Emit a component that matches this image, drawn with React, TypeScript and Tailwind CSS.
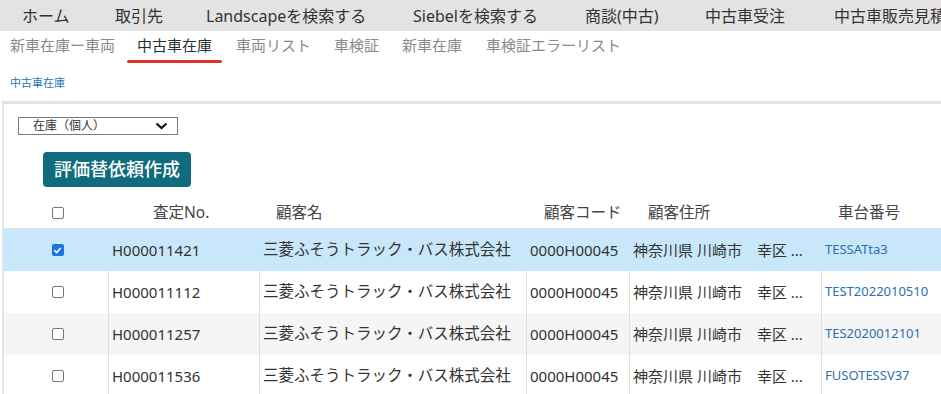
import React from 'react';

const navItems = [
  { label: 'ホーム', w: 'w-[93px]' },
  { label: '取引先', w: 'w-[91px]' },
  { label: 'Landscapeを検索する', w: 'w-[207px]' },
  { label: 'Siebelを検索する', w: 'w-[172px]' },
  { label: '商談(中古)', w: 'w-[120px]' },
  { label: '中古車受注', w: 'w-[129px]' },
  { label: '中古車販売見積', w: 'w-[140px]' },
];

const tabs = [
  { label: '新車在庫ー車両', w: 'w-[127px]' },
  { label: '中古車在庫', w: 'w-[99px]' },
  { label: '車両リスト', w: 'w-[98px]' },
  { label: '車検証', w: 'w-[68px]' },
  { label: '新車在庫', w: 'w-[84px]' },
  { label: '車検証エラーリスト', w: 'w-[160px]' },
];

const rows = [
  { checked: true, no: 'H000011421', vin: 'TESSATta3' },
  { checked: false, no: 'H000011112', vin: 'TEST2022010510' },
  { checked: false, no: 'H000011257', vin: 'TES2020012101' },
  { checked: false, no: 'H000011536', vin: 'FUSOTESSV37' },
];

const font = { fontFamily: '"Noto Sans", "Noto Sans CJK JP", sans-serif' };

function Checkbox({ checked }: { checked?: boolean }) {
  if (checked) {
    return (
      <span className="flex h-[12px] w-[12px] items-center justify-center rounded-[2px] bg-[#1a73e8]">
        <svg width="9" height="9" viewBox="0 0 10 10">
          <path d="M2 5.2 L4.2 7.3 L8 2.8" fill="none" stroke="white" strokeWidth="1.8" strokeLinecap="round" strokeLinejoin="round" />
        </svg>
      </span>
    );
  }
  return <span className="block h-[12px] w-[12px] rounded-[2px] border border-[#767676] bg-white" />;
}

export default function App() {
  return (
    <div className="h-[394px] w-[941px] overflow-hidden bg-white text-[#333]" style={font}>
      {/* Top nav */}
      <div className="flex h-[31px] items-center whitespace-nowrap bg-[#e3e3e3] pl-[22px] text-[16px] text-[#333]">
        {navItems.map((n) => (
          <span key={n.label} className={`shrink-0 ${n.w}`}>
            {n.label}
          </span>
        ))}
      </div>

      {/* Tabs */}
      <div className="flex h-[31px] items-start whitespace-nowrap pl-[10px] pt-[3px] text-[15px] text-[#8a8a8a]">
        {tabs.map((t) => (
          <span key={t.label} className={`shrink-0 ${t.w}`}>
            {t.label === '中古車在庫' ? (
              <span className="relative -ml-[10px] px-[10px] text-[#1f2f33]">
                {t.label}
                <span className="absolute bottom-[-8px] left-0 h-[3px] w-full rounded-full bg-[#e0342a]" />
              </span>
            ) : (
              t.label
            )}
          </span>
        ))}
      </div>

      {/* Breadcrumb */}
      <div className="h-[39px] pl-[10px] pt-[13px] text-[11px] text-[#2b74b8]">中古車在庫</div>

      {/* Panel */}
      <div className="ml-[2px] border-l-[2px] border-t-[3px] border-[#dde5ec]">
        <div className="pl-[14px] pt-[13px]">
          <div className="flex h-[18px] w-[160px] items-center justify-between border border-[#7a7a7a] pl-[14px] pr-[9px] text-[12px] text-[#333]">
            <span>在庫（個人）</span>
            <svg width="13" height="8" viewBox="0 0 13 8">
              <path d="M1.5 1.5 L6.5 6 L11.5 1.5" fill="none" stroke="#111" strokeWidth="2.2" />
            </svg>
          </div>
        </div>
        <div className="pl-[39px] pt-[17px]">
          <button className="flex h-[35px] w-[148px] items-center justify-center rounded-[4px] bg-[#0f6b7d] text-[18px] font-medium text-white">
            評価替依頼作成
          </button>
        </div>

        {/* Table */}
        <div className="mt-[10px] text-[15px]">
          <div className="flex h-[32px] items-center border-b border-[#e6e6e6] text-[15.5px] text-[#444]">
            <div className="flex w-[104px] justify-center pl-[3px]">
              <Checkbox />
            </div>
            <div className="w-[151px] pl-[45px]">査定No.</div>
            <div className="w-[267px] pl-[17px]">顧客名</div>
            <div className="w-[103px] pl-[18px]">顧客コード</div>
            <div className="w-[192px] pl-[19px]">顧客住所</div>
            <div className="flex-1 pl-[17px]">車台番号</div>
          </div>
          {rows.map((r, i) => (
            <div
              key={r.no}
              className={`flex h-[42px] items-center whitespace-nowrap text-[#333] ${
                r.checked ? 'bg-[#c9e7fa]' : i % 2 === 0 ? 'bg-[#f5f5f5]' : 'bg-white'
              }`}
            >
              <div className="flex h-full w-[104px] items-center justify-center pl-[3px]">
                <Checkbox checked={r.checked} />
              </div>
              <div className={`flex h-full w-[151px] items-center border-l pl-[3px] ${r.checked ? 'border-transparent' : 'border-[#dedede]'}`}>
                {r.no}
              </div>
              <div className={`flex h-full w-[267px] items-center border-l pl-[3px] text-[15.5px] ${r.checked ? 'border-transparent' : 'border-[#dedede]'}`}>
                三菱ふそうトラック・バス株式会社
              </div>
              <div className={`flex h-full w-[103px] items-center border-l pl-[3px] ${r.checked ? 'border-transparent' : 'border-[#dedede]'}`}>
                0000H00045
              </div>
              <div className={`flex h-full w-[192px] items-center border-l pl-[3px] ${r.checked ? 'border-transparent' : 'border-[#dedede]'}`}>
                神奈川県 川崎市　幸区 ...
              </div>
              <div className={`flex h-full flex-1 items-center border-l pl-[3px] text-[13px] text-[#2c6fad] ${r.checked ? 'border-transparent' : 'border-[#dedede]'}`}>
                {r.vin}
              </div>
            </div>
          ))}
        </div>
      </div>
    </div>
  );
}
